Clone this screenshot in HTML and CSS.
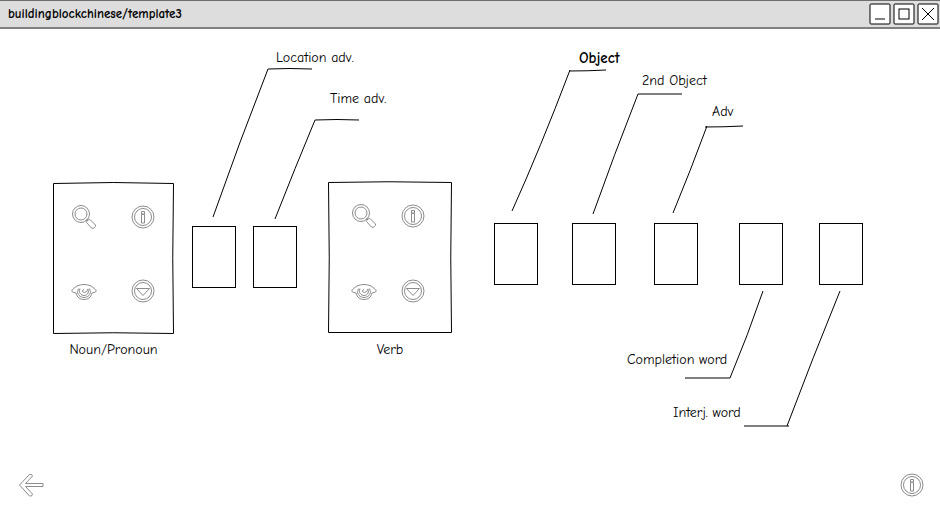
FILE: index.html
```html
<!DOCTYPE html>
<html lang="en">
<head>
<meta charset="utf-8">
<title>buildingblockchinese/template3</title>
<link rel="stylesheet" href="styles.css">
</head>
<body>
<svg class="defs" aria-hidden="true">
  <symbol id="search" viewBox="0 0 26 26">
    <circle cx="10" cy="10" r="8.500"/><circle cx="10" cy="10" r="6"/>
    <path d="M14.500 17L17 14.500M15.500 18.500Q15.500 17 17 16Q18.500 15 19.500 16L24.500 21Q25 22.500 23.500 23.500Q22 25 20.500 24Z"/>
  </symbol>
  <symbol id="info" viewBox="0 0 26 26">
    <circle cx="13" cy="13" r="11"/><circle cx="13" cy="13" r="8.500"/>
    <path d="M11.500 7.500h3v2.500h-3zM11.500 10.500h3v8.500h-3z"/>
  </symbol>
  <symbol id="eye" viewBox="0 0 26 26">
    <path d="M.5 13Q5 6.500 13 6.500T25.500 13Q24.500 14.500 21 15C20 19.500 17 21.500 13 21.500S6 19.500 5 15Q1.500 14.500 .5 13Z"/>
    <path d="M7.500 10.500C4.500 17 10 19.500 13 19.500S21.500 17 18.500 10.500"/>
    <path d="M9 10.500C7 15 10.500 17.500 13 17.500S18.500 15.500 17 11Q16 14.500 13.500 14.500Q11 14 11.500 12.500L13 11.500"/>
  </symbol>
  <symbol id="down" viewBox="0 0 26 26">
    <circle cx="13" cy="13" r="11"/><circle cx="13" cy="13" r="8.500"/>
    <path d="M6.500 10.500H19.500L13 17.500Z"/>
  </symbol>
  <symbol id="back" viewBox="0 0 26 26">
    <path d="M1.500 13L11.500 2.500Q14 1.500 14.500 4L7.500 11.500H25V14.500H7.500L14.500 22Q14 25 11.500 24Z"/>
  </symbol>
</svg>

<header class="titlebar">
  <h1 class="title">buildingblockchinese/template3</h1>
  <div class="window-controls">
    <button class="control" aria-label="Minimize"><svg viewBox="0 0 22 22"><rect x="1" y="1" width="20" height="20" rx="1"/><path d="M6 16H16"/></svg></button>
    <button class="control" aria-label="Maximize"><svg viewBox="0 0 22 22"><rect x="1" y="1" width="20" height="20" rx="1"/><rect x="6" y="6" width="10" height="10"/></svg></button>
    <button class="control" aria-label="Close"><svg viewBox="0 0 22 22"><rect x="1" y="1" width="20" height="20" rx="1"/><path d="M5 5L17 17M17 5L5 17"/></svg></button>
  </div>
</header>

<main class="sentence">
  <section class="word">
    <div class="card card-noun">
      <svg class="outline" viewBox="0 0 121 151" preserveAspectRatio="none"><path d="M.5 1.500Q60-.5 120.500 1.500Q119 76 120.500 151.500Q60 150 .5 151.500Z"/></svg>
      <button class="icon" aria-label="Search"><svg><use href="#search"/></svg></button>
      <button class="icon" aria-label="Info"><svg><use href="#info"/></svg></button>
      <button class="icon" aria-label="Show"><svg><use href="#eye"/></svg></button>
      <button class="icon" aria-label="Choose"><svg><use href="#down"/></svg></button>
    </div>
    <h2 class="label">Noun/Pronoun</h2>
  </section>

  <div class="slot slot-adverb">
    <svg class="leader"><path d="M21-9Q47-83 76-157Q98-158 120-157"/></svg>
    <span class="label note note-location">Location adv.</span>
  </div>
  <div class="slot slot-adverb">
    <svg class="leader"><path d="M22-7Q42-58 62-106Q84-107 106-106"/></svg>
    <span class="label note note-time">Time adv.</span>
  </div>

  <section class="word">
    <div class="card card-verb">
      <svg class="outline" viewBox="0 0 124 151" preserveAspectRatio="none"><path d="M.5 .5Q60-1 123.500 .5Q122 76 123.500 150.500H.5Q2 76 .5 .5Z"/></svg>
      <button class="icon" aria-label="Search"><svg><use href="#search"/></svg></button>
      <button class="icon" aria-label="Info"><svg><use href="#info"/></svg></button>
      <button class="icon" aria-label="Show"><svg><use href="#eye"/></svg></button>
      <button class="icon" aria-label="Choose"><svg><use href="#down"/></svg></button>
    </div>
    <h2 class="label">Verb</h2>
  </section>

  <div class="slot">
    <svg class="leader"><path d="M18-12Q46-74 76-153M75-152Q94-152 112-153"/></svg>
    <span class="label note note-object">Object</span>
  </div>
  <div class="slot">
    <svg class="leader"><path d="M21-9Q42-68 66-129H110"/></svg>
    <span class="label note note-second">2nd Object</span>
  </div>
  <div class="slot">
    <svg class="leader"><path d="M19-10Q36-51 53-97M51-96Q70-96 89-97"/></svg>
    <span class="label note note-adv">Adv</span>
  </div>
  <div class="slot">
    <svg class="leader"><path d="M24 68Q9 112-9 155H-54"/></svg>
    <span class="label note note-completion">Completion word</span>
  </div>
  <div class="slot">
    <svg class="leader"><path d="M21 68Q-6 134-32 203M-30 203H-75"/></svg>
    <span class="label note note-interj">Interj. word</span>
  </div>
</main>

<footer class="footer">
  <button class="icon" aria-label="Back"><svg><use href="#back"/></svg></button>
  <button class="icon" aria-label="Info"><svg><use href="#info"/></svg></button>
</footer>
</body>
</html>
```
FILE: styles.css
```css
* { box-sizing: border-box; }

body {
  margin: 0;
  min-height: 100vh;
  display: flex;
  flex-direction: column;
  background: #fff;
  color: #000;
  font-family: "Comic Sans MS", "Comic Neue", Lato, sans-serif;
}

svg { fill: none; stroke: #000; stroke-width: 1; }

button {
  padding: 0;
  border: 0;
  background: none;
}

.defs { position: absolute; width: 0; height: 0; }

.titlebar {
  display: flex;
  align-items: center;
  justify-content: space-between;
  height: 29px;
  padding: 0 1px 0 8px;
  background: #ddd;
  border-top: 1px solid #6e6e6e;
  border-bottom: 2px solid #808080;
}

.title { margin: 0; font-size: 13px; line-height: 18px; }

.window-controls { display: flex; gap: 2px; }

.control { width: 22px; height: 22px; }
.control svg { display: block; fill: #fff; }

.sentence {
  flex: 1;
  display: grid;
  grid-template-columns: 139fr 61fr 75fr 166fr 78fr 82fr 85fr 80fr 44fr;
  align-items: start;
  padding: 153px 77px 0 53px;
}

.word { justify-self: start; text-align: center; }

.card {
  position: relative;
  display: grid;
  grid-template-columns: 26px 26px;
  row-gap: 49px;
  height: 151px;
  padding-top: 21px;
  align-content: start;
}
.card-noun { width: 121px; padding-top: 22px; row-gap: 48px; padding-left: 18px; column-gap: 33px; }
.card-verb { width: 124px; padding-left: 23px; column-gap: 23px; }

.outline {
  position: absolute;
  inset: 0;
  width: 100%;
  height: 100%;
  overflow: visible;
}

.icon { position: relative; width: 26px; height: 26px; }
.icon svg { display: block; width: 26px; height: 26px; stroke: #8c8c8c; }

.label {
  margin: 0;
  font-size: 14px;
  font-weight: 400;
  line-height: 18px;
  white-space: nowrap;
}
.word .label { margin-top: 8px; }

.slot {
  position: relative;
  width: 44px;
  height: 62px;
  margin-top: 41px;
  border: 1px solid #000;
}
.slot-adverb { margin-top: 44px; }

/* Leader lines and notes are drawn from the corner of their slot. */
.leader {
  position: absolute;
  top: -1px;
  left: -1px;
  width: 44px;
  height: 62px;
  overflow: visible;
}

.note { position: absolute; }
.note-location { left: 83px; top: -178px; }
.note-time { left: 76px; top: -137px; }
.note-object { left: 84px; top: -175px; font-size: 15px; font-weight: 700; }
.note-second { left: 69px; top: -152px; }
.note-adv { left: 57px; top: -121px; }
.note-completion { left: -113px; top: 127px; }
.note-interj { left: -147px; top: 180px; }

.footer {
  display: flex;
  justify-content: space-between;
  padding: 0 15px 13px 18px;
}
```
